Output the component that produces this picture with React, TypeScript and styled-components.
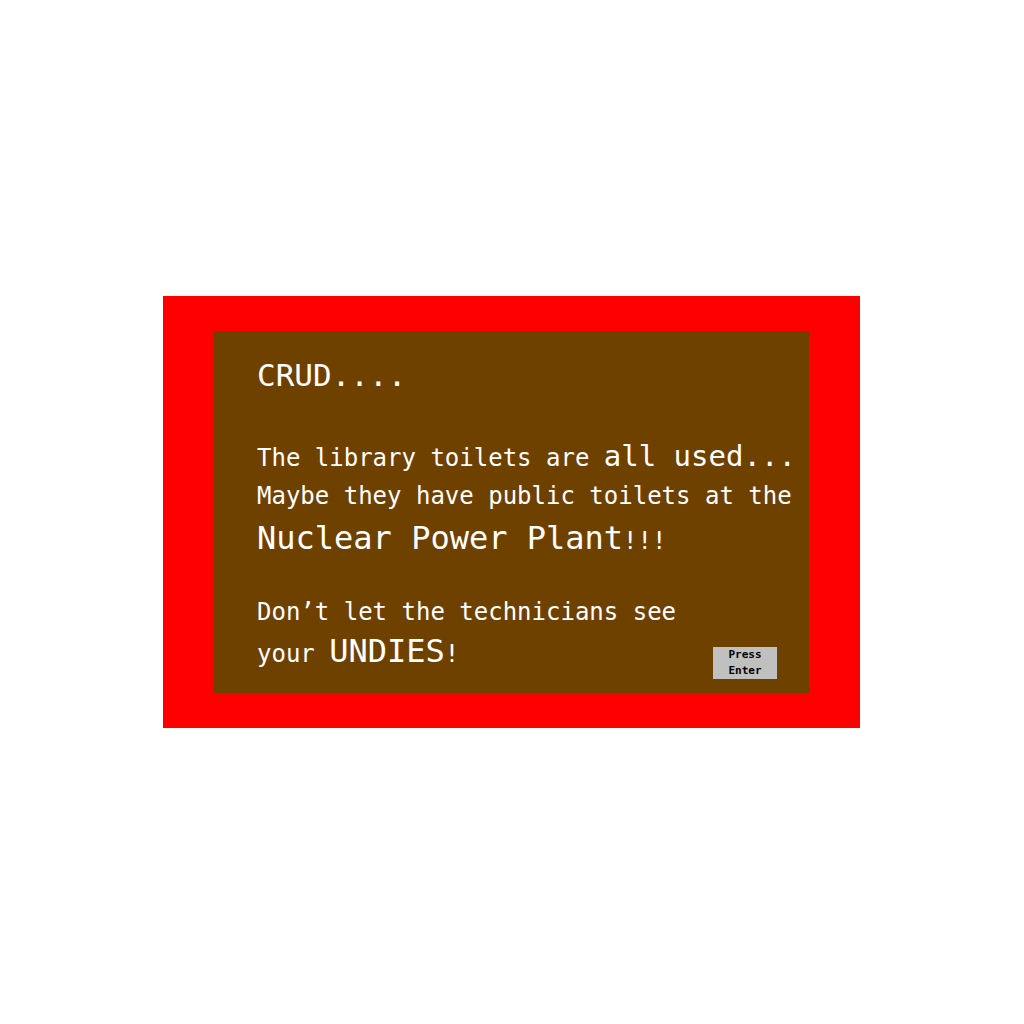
import React from "react";
import styled, { createGlobalStyle } from "styled-components";

const GlobalStyle = createGlobalStyle`
  html, body {
    margin: 0;
    padding: 0;
    background: #ffffff;
  }
  body {
    font-family: "DejaVu Sans Mono", "Liberation Mono", monospace;
  }
`;

const Page = styled.div`
  width: 1023px;
  height: 1024px;
  display: flex;
  align-items: center;
  justify-content: center;
`;

const Frame = styled.div`
  background: #ff0000;
  padding: 35px 51px;
`;

const Panel = styled.div`
  width: 595px;
  height: 362px;
  box-sizing: border-box;
  background: #6f4100;
  color: #ffffff;
  padding: 24px 32px 0 43px;
  font-family: "DejaVu Sans Mono", "Liberation Mono", monospace;
  font-size: 24px;
  white-space: nowrap;
`;

const Title = styled.div`
  font-size: 31px;
  height: 40px;
  line-height: 40px;
  margin-bottom: 44px;
`;

const Line = styled.div<{ $h: number; $gap?: number }>`
  height: ${(p) => p.$h}px;
  line-height: ${(p) => p.$h}px;
  margin-top: ${(p) => p.$gap ?? 0}px;
`;

const Big = styled.span<{ $size: number }>`
  font-size: ${(p) => p.$size}px;
  line-height: 0;
`;

const LastRow = styled.div`
  display: flex;
  justify-content: space-between;
  align-items: flex-start;
`;

const PressButton = styled.button`
  margin-top: 16px;
  width: 64px;
  height: 32px;
  padding: 0;
  border: none;
  background: #c0c0c0;
  color: #000000;
  font-family: "DejaVu Sans Mono", "Liberation Mono", monospace;
  font-size: 11px;
  font-weight: bold;
  line-height: 16px;
  text-align: center;
  display: flex;
  flex-direction: column;
  align-items: center;
  justify-content: center;
  cursor: pointer;
`;

export default function App() {
  return (
    <>
      <GlobalStyle />
      <Page>
        <Frame>
          <Panel>
            <Title>CRUD....</Title>
            <Line $h={38}>
              The library toilets are <Big $size={29}>all used...</Big>
            </Line>
            <Line $h={38}>Maybe they have public toilets at the</Line>
            <Line $h={52}>
              <Big $size={32}>Nuclear Power Plant</Big>!!!
            </Line>
            <Line $h={38} $gap={26}>
              Don’t let the technicians see
            </Line>
            <LastRow>
              <Line $h={46}>
                your <Big $size={32}>UNDIES</Big>!
              </Line>
              <PressButton>
                <span>Press</span>
                <span>Enter</span>
              </PressButton>
            </LastRow>
          </Panel>
        </Frame>
      </Page>
    </>
  );
}
